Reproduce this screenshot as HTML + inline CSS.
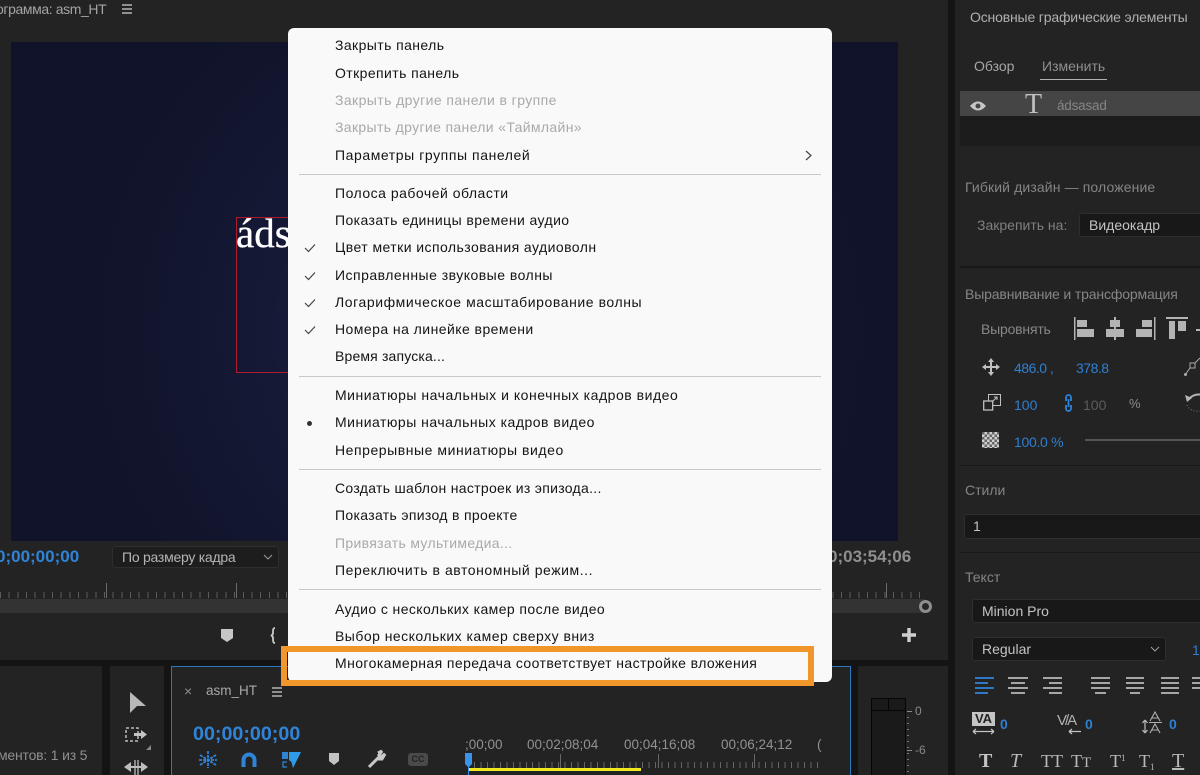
<!DOCTYPE html>
<html lang="ru"><head><meta charset="utf-8"><title>Меню панели</title>
<style>
*{box-sizing:border-box}
html,body{margin:0;padding:0;width:1200px;height:775px;overflow:hidden;background:#232323}
body{position:relative;font-family:"Liberation Sans","DejaVu Sans",sans-serif;color:#a8a8a8;font-size:14px}
.a{position:absolute}
.t{position:absolute;white-space:nowrap;line-height:18px}
.b{color:#2f7fd0}
.m{position:absolute;left:335px;white-space:nowrap;line-height:18px;font-size:14px;color:#141414;letter-spacing:.41px}
.d{color:#a9a9a9}
.s{position:absolute;left:299px;width:522px;height:1px;background:#c9c9c9}
.c{position:absolute;left:303px;width:14px;height:12px}
svg{position:absolute;overflow:visible}
.box{position:absolute;background:#181818;border:1px solid #2e2e2e;border-radius:3px;color:#c4c4c4;line-height:22px;white-space:nowrap}
</style></head><body>

<!-- panel gutters -->
<div class="a" style="left:0;top:660px;width:948px;height:6px;background:#141414"></div>
<div class="a" style="left:948px;top:0;width:7px;height:775px;background:#141414"></div>
<div class="a" style="left:102px;top:660px;width:8px;height:115px;background:#141414"></div>
<div class="a" style="left:164px;top:660px;width:7px;height:115px;background:#141414"></div>
<div class="a" style="left:851px;top:660px;width:7px;height:115px;background:#141414"></div>

<!-- program monitor -->
<div class="t" style="left:-21px;top:0;font-size:14px;color:#a4a4a4;letter-spacing:-.4px">Программа: asm_HT</div>
<svg style="left:122px;top:4px" width="11" height="10"><path d="M0 1H10M0 5H10M0 9H10" stroke="#b4b4b4" stroke-width="1.4"/></svg>
<div class="a" style="left:11px;top:42px;width:887px;height:499px;background:radial-gradient(ellipse 420px 420px at 470px 290px,#1a1e40 0%,#161a38 45%,#11142b 85%,#10132a 100%)"></div>
<div class="a" style="left:236px;top:217px;width:70px;height:156px;border:1px solid #b01a2c"></div>
<div class="t" style="left:236px;top:210px;font:41px/46px 'Liberation Serif',serif;color:#fff;-webkit-text-stroke:.3px #fff">áds</div>

<div class="t" style="left:-4px;top:548px;font-size:17px;color:#2f84d8;font-weight:bold">0;00;00;00</div>
<div class="box" style="left:112px;top:546px;width:167px;height:22px;color:#b4b4b4;padding-left:9px;line-height:20px;background:#1d1d1d;letter-spacing:-.25px">По размеру кадра</div>
<svg style="left:263px;top:554px" width="10" height="6"><path d="M1 1L5 5L9 1" fill="none" stroke="#999" stroke-width="1.1"/></svg>
<div class="t" style="left:828px;top:548px;font-size:17px;color:#8f8f8f;font-weight:bold">0;03;54;06</div>

<!-- scrub ruler -->
<div class="a" style="left:0;top:592px;width:925px;height:6px;background:repeating-linear-gradient(90deg,#5c5c5c 0 1px,transparent 1px 8.67px)"></div>
<div class="a" style="left:-24px;top:583px;width:949px;height:15px;background:repeating-linear-gradient(90deg,#6a6a6a 0 1px,transparent 1px 130px)"></div>
<div class="a" style="left:0;top:599px;width:925px;height:14px;background:#333"></div>
<div class="a" style="left:919px;top:600px;width:13px;height:13px;border:3px solid #8e8e8e;border-radius:50%;background:#262626"></div>

<!-- transport icons -->
<svg style="left:221px;top:629px" width="13" height="14"><path d="M0 0H12V9L6 13L0 9Z" fill="#c6c6c6"/></svg>
<svg style="left:270px;top:627px" width="8" height="17"><path d="M5 1Q3 1 3 4V6Q3 8 1 8.5Q3 9 3 11V13Q3 16 5 16" fill="none" stroke="#c8c8c8" stroke-width="1.8"/></svg>
<svg style="left:902px;top:628px" width="15" height="15"><path d="M7 0V14M0 7H14" stroke="#cfcfcf" stroke-width="3.4"/></svg>

<!-- project panel remainder -->
<div class="t" style="left:-2px;top:746px;font-size:14px;color:#8f8f8f;letter-spacing:-.2px">ментов: 1 из 5</div>

<!-- tools -->
<svg style="left:130px;top:692px" width="17" height="22"><path d="M0 0L16 14H7L0 21Z" fill="#b8b8b8"/></svg>
<svg style="left:125px;top:727px" width="24" height="18"><rect x="1" y="1" width="12" height="13" fill="none" stroke="#bbb" stroke-width="1.5" stroke-dasharray="3 2"/><path d="M9 6H16V3L22 7.5L16 12V9H9Z" fill="#c4c4c4"/></svg>
<svg style="left:124px;top:760px" width="25" height="15"><path d="M0 7L7 2V12ZM24 7L17 2V12Z" fill="#bdbdbd"/><path d="M11 0V15M14 0V15" stroke="#bdbdbd" stroke-width="1.3"/><path d="M6 7H19" stroke="#bdbdbd" stroke-width="2"/></svg>
<svg style="left:146px;top:745px" width="6" height="6"><path d="M5 0V5H0Z" fill="#888"/></svg>

<!-- timeline panel -->
<div class="a" style="left:171px;top:666px;width:680px;height:120px;border:1px solid #2f78bf"></div>
<div class="t" style="left:184px;top:682px;font-size:14px;color:#909090">×</div>
<div class="t" style="left:206px;top:682px;font-size:13.5px;color:#a8a8a8">asm_HT</div>
<svg style="left:272px;top:687px" width="11" height="10"><path d="M0 1H10M0 5H10M0 9H10" stroke="#b4b4b4" stroke-width="1.4"/></svg>
<div class="t" style="left:193px;top:723px;font-size:19.7px;line-height:22px;color:#2f84d8;font-weight:bold">00;00;00;00</div>
<svg style="left:198px;top:751px" width="20" height="18"><path d="M10 0V17M2 4L18 14M2 14L18 4M1 9H19" stroke="#2f84d8" stroke-width="1.8" stroke-dasharray="3 1"/></svg>
<svg style="left:241px;top:752px" width="16" height="15"><path d="M2.5 15V8A5.5 5.5 0 0 1 13.5 8V15" fill="none" stroke="#2f84d8" stroke-width="4"/></svg>
<svg style="left:282px;top:751px" width="19" height="18"><path d="M0 1H6V8H0Z" fill="#2f84d8"/><path d="M5 11H1V16H5" fill="none" stroke="#2f84d8" stroke-width="1.3"/><path d="M7 1H19L11 17L9.5 11L7 9Z" fill="#2f9be8"/></svg>
<svg style="left:329px;top:753px" width="11" height="13"><path d="M0 0H10V8L5 12L0 8Z" fill="#c2c2c2"/></svg>
<svg style="left:367px;top:750px" width="19" height="19"><path d="M2 17L12 7M11 3L15 1L12 5L14 7L18 4L15 9L11 9" fill="none" stroke="#c8c8c8" stroke-width="3"/></svg>
<div class="a" style="left:408px;top:753px;width:20px;height:13px;background:#4a4a4a;border-radius:3px;font:bold 9px/13px 'Liberation Sans',sans-serif;color:#232323;text-align:center">CC</div>

<div class="t" style="left:465px;top:736px;font-size:13.5px;color:#929292">;00;00</div>
<div class="t" style="left:527px;top:736px;font-size:13.5px;color:#929292">00;02;08;04</div>
<div class="t" style="left:624px;top:736px;font-size:13.5px;color:#929292">00;04;16;08</div>
<div class="t" style="left:721px;top:736px;font-size:13.5px;color:#929292">00;06;24;12</div>
<div class="t" style="left:817px;top:736px;font-size:13.5px;color:#929292">(</div>
<div class="a" style="left:474px;top:762px;width:346px;height:6px;background:repeating-linear-gradient(90deg,#666 0 1px,transparent 1px 6.47px)"></div>
<div class="a" style="left:560px;top:754px;width:1px;height:14px;background:#666"></div>
<div class="a" style="left:658px;top:754px;width:1px;height:14px;background:#666"></div>
<div class="a" style="left:754px;top:754px;width:1px;height:14px;background:#666"></div>
<div class="a" style="left:468px;top:768px;width:173px;height:3px;background:#f1e81f"></div>
<svg style="left:465px;top:753px" width="8" height="22"><path d="M0 0H7V11L4 14H3L0 11Z" fill="#3a94ea"/><path d="M3.5 14V22" stroke="#3a94ea"/></svg>

<!-- audio meter -->
<div class="a" style="left:871px;top:698px;width:35px;height:77px;background:#1a1a1a;border:1px solid #050505;border-bottom:0"></div>
<div class="a" style="left:871px;top:710px;width:35px;height:1px;background:#050505"></div>
<div class="a" style="left:888px;top:698px;width:1px;height:12px;background:#050505"></div>
<div class="a" style="left:907px;top:711px;width:5px;height:1px;background:#888"></div>
<div class="a" style="left:907px;top:750px;width:5px;height:1px;background:#888"></div>
<div class="a" style="left:907px;top:717px;width:2px;height:58px;background:repeating-linear-gradient(180deg,#777 0 1px,transparent 1px 6px)"></div>
<div class="t" style="left:915px;top:702px;font-size:12px;color:#8a8a8a">0</div>
<div class="t" style="left:915px;top:741px;font-size:12px;color:#8a8a8a">-6</div>

<!-- essential graphics -->
<div class="t" style="left:970px;top:8px;font-size:14px;color:#b0b0b0;letter-spacing:-.17px">Основные графические элементы</div>
<div class="t" style="left:974px;top:57px;font-size:14px;color:#a6a6a6">Обзор</div>
<div class="t" style="left:1042px;top:57px;font-size:14px;color:#8f8f8f">Изменить</div>
<div class="a" style="left:1040px;top:79px;width:67px;height:1px;background:#b0b0b0"></div>
<div class="a" style="left:960px;top:91px;width:240px;height:25px;background:#454545"></div>
<div class="a" style="left:960px;top:116px;width:240px;height:30px;background:#1c1c1c"></div>
<svg style="left:970px;top:100px" width="17" height="12"><path d="M0 6Q8 -3 16 6Q8 15 0 6Z" fill="#c6c6c6"/><circle cx="8" cy="6" r="2.5" fill="#454545"/></svg>
<div class="t" style="left:1025px;top:89px;font:28px/32px 'Liberation Serif',serif;color:#c2c2c2">T</div>
<div class="t" style="left:1057px;top:97px;font-size:13.5px;color:#858585;letter-spacing:-.2px">ádsasad</div>

<div class="t" style="left:965px;top:178px;font-size:14px;color:#858585;letter-spacing:.12px">Гибкий дизайн — положение</div>
<div class="t" style="left:977px;top:216px;font-size:14px;color:#7f7f7f">Закрепить на:</div>
<div class="box" style="left:1079px;top:213px;width:140px;height:24px;padding-left:9px;font-size:14px">Видеокадр</div>
<div class="a" style="left:960px;top:266px;width:240px;height:2px;background:#191919"></div>

<div class="t" style="left:965px;top:285px;font-size:14px;color:#858585;letter-spacing:-.14px">Выравнивание и трансформация</div>
<div class="t" style="left:981px;top:320px;font-size:14px;color:#878787;letter-spacing:-.2px">Выровнять</div>
<svg style="left:1074px;top:317px" width="126" height="24"><g fill="#b4b4b4"><path d="M0 0H1.5V23H0ZM3 3H13V10H3ZM3 12H20V20H3Z"/><path d="M40 0H42V23H40ZM36 3H46V10H36ZM32 12H50V20H32Z"/><path d="M80 0H81.5V23H80ZM68 3H78V10H68ZM62 12H78V20H62Z"/><path d="M92 0H114V2H92ZM95 4H101V22H95ZM104 4H112V14H104Z"/><path d="M122 12H126V14H122Z"/></g></svg>

<svg style="left:982px;top:358px" width="18" height="18"><path d="M9 0L12 4H10V8H14V6L18 9L14 12V10H10V14H12L9 18L6 14H8V10H4V12L0 9L4 6V8H8V4H6Z" fill="#c0c0c0"/></svg>
<div class="t b" style="left:1014px;top:359px;font-size:14px;letter-spacing:-.5px">486.0 ,</div>
<div class="t b" style="left:1076px;top:359px;font-size:14px;letter-spacing:-.5px">378.8</div>
<svg style="left:1184px;top:358px" width="16" height="20"><rect x="6" y="5" width="5" height="5" fill="none" stroke="#aaa"/><path d="M6 10L1 17M11 5L16 0" stroke="#aaa"/><circle cx="1.5" cy="16.5" r="1.5" fill="#aaa"/></svg>

<svg style="left:983px;top:394px" width="18" height="17"><rect x="5.5" y="0.5" width="12" height="11" fill="none" stroke="#c0c0c0"/><rect x="0.7" y="7" width="9" height="9" fill="#232323" stroke="#c0c0c0" stroke-width="1.3"/><path d="M9 8L14 3M11 3H14V6" fill="none" stroke="#c0c0c0"/></svg>
<div class="t b" style="left:1014px;top:396px;font-size:14px">100</div>
<svg style="left:1064px;top:394px" width="9" height="18"><path d="M2 7V3.5A2.5 2.5 0 0 1 7 3.5V7M2 11V14.5A2.5 2.5 0 0 0 7 14.5V11M4.5 5V13" fill="none" stroke="#2f84d8" stroke-width="1.8"/></svg>
<div class="t" style="left:1083px;top:396px;font-size:14px;color:#5c5c5c">100</div>
<div class="t" style="left:1129px;top:395px;font-size:13px;color:#8c8c8c">%</div>
<svg style="left:1184px;top:393px" width="16" height="20"><path d="M16 1.5Q9 1 5 6" fill="none" stroke="#b4b4b4" stroke-width="2"/><path d="M1 2L3 9L8 5Z" fill="#b4b4b4"/><path d="M3 12Q6 19 16 18" fill="none" stroke="#777" stroke-dasharray="1 2"/></svg>

<div class="a" style="left:982px;top:432px;width:17px;height:16px;background:repeating-conic-gradient(#d0d0d0 0 25%,#666 0 50%) 0 0/5px 5px"></div>
<div class="t b" style="left:1014px;top:433px;font-size:14px;letter-spacing:-.3px">100.0 %</div>
<div class="a" style="left:1085px;top:439px;width:115px;height:2px;background:#555"></div>
<div class="a" style="left:960px;top:465px;width:240px;height:1px;background:#191919"></div>

<div class="t" style="left:965px;top:481px;font-size:14px;color:#858585">Стили</div>
<div class="box" style="left:964px;top:514px;width:250px;height:25px;padding-left:8px;font-size:14px">1</div>
<div class="a" style="left:960px;top:552px;width:240px;height:1px;background:#191919"></div>

<div class="t" style="left:965px;top:568px;font-size:14px;color:#858585">Текст</div>
<div class="box" style="left:972px;top:599px;width:240px;height:24px;padding-left:9px;font-size:14px">Minion Pro</div>
<div class="box" style="left:972px;top:637px;width:194px;height:24px;padding-left:9px;font-size:14px">Regular</div>
<svg style="left:1150px;top:646px" width="10" height="6"><path d="M1 1L5 5L9 1" fill="none" stroke="#999" stroke-width="1.1"/></svg>
<div class="t b" style="left:1192px;top:641px;font-size:14px">10</div>

<svg style="left:975px;top:677px" width="225" height="17" stroke-width="2" fill="none">
<path d="M0 1H19M0 6H13M0 11H19M0 16H13" stroke="#2f78c8"/>
<path d="M33 1H53M36 6H50M33 11H53M36 16H50M68 1H87M74 6H87M68 11H87M74 16H87M116 1H135M116 6H135M116 11H135M120 16H131M151 1H169M151 6H169M151 11H169M155 16H165M186 1H204M186 6H204M186 11H204M186 16H204M217 1H225M217 6H225M217 11H225" stroke="#a6a6a6"/>
</svg>

<div class="a" style="left:972px;top:712px;width:23px;height:14px;background:#c4c4c4;color:#232323;font:bold 13px/14px 'Liberation Sans',sans-serif;text-align:center">VA</div>
<svg style="left:972px;top:728px" width="23" height="7"><path d="M1 3.5H22M1 3.5L4 1M1 3.5L4 6M22 3.5L19 1M22 3.5L19 6" fill="none" stroke="#c4c4c4" stroke-width="1.2"/></svg>
<div class="t b" style="left:1000px;top:715px;font-size:14px;font-weight:bold">0</div>
<div class="t" style="left:1057px;top:712px;font-size:15px;color:#b0b0b0;letter-spacing:-2px">V/A</div>
<svg style="left:1068px;top:728px" width="14" height="7"><path d="M13 3.5H1M1 3.5L4 1M1 3.5L4 6" fill="none" stroke="#c4c4c4" stroke-width="1.2"/></svg>
<div class="t b" style="left:1085px;top:715px;font-size:14px;font-weight:bold">0</div>
<svg style="left:1142px;top:711px" width="22" height="24"><path d="M3 9V22M3 9L0.5 12M3 9L5.5 12M3 22L0.5 19M3 22L5.5 19" fill="none" stroke="#b4b4b4" stroke-width="1.3"/><path d="M8 10L13 1L18 10M10 7H16M8 22L13 13L18 22M10 19H16M7 11.5H20" fill="none" stroke="#b0b0b0" stroke-width="1.1"/></svg>
<div class="t b" style="left:1169px;top:715px;font-size:14px;font-weight:bold">0</div>

<div class="t" style="left:979px;top:751px;font:bold 20px/20px 'Liberation Serif',serif;color:#c4c4c4">T</div>
<div class="t" style="left:1010px;top:751px;font:italic 20px/20px 'Liberation Serif',serif;color:#b8b8b8">T</div>
<div class="t" style="left:1041px;top:751px;font:18px/20px 'Liberation Serif',serif;color:#b8b8b8">TT</div>
<div class="t" style="left:1071px;top:751px;font:18px/20px 'Liberation Serif',serif;color:#b8b8b8">T<span style="font-size:15px">T</span></div>
<div class="t" style="left:1110px;top:751px;font:18px/20px 'Liberation Serif',serif;color:#b8b8b8">T<span style="font-size:9px;position:relative;top:-6px">1</span></div>
<div class="t" style="left:1139px;top:751px;font:18px/20px 'Liberation Serif',serif;color:#b8b8b8">T<span style="font-size:9px;position:relative;top:3px">1</span></div>
<div class="t" style="left:1172px;top:751px;font:20px/20px 'Liberation Serif',serif;color:#b8b8b8;text-decoration:underline">T</div>

<!-- context menu -->
<div class="a" style="left:288px;top:28px;width:544px;height:654px;background:#f9f9f9;border-radius:6px"></div>

<div class="m" style="top:36px">Закрыть панель</div>
<div class="m" style="top:64px">Открепить панель</div>
<div class="m d" style="top:91px">Закрыть другие панели в группе</div>
<div class="m d" style="top:118px;letter-spacing:.35px">Закрыть другие панели «Таймлайн»</div>
<div class="m" style="top:146px;letter-spacing:.57px">Параметры группы панелей</div>
<svg style="left:805px;top:150px" width="7" height="11"><path d="M1 1L6 5.5L1 10" fill="none" stroke="#444" stroke-width="1.2"/></svg>
<div class="s" style="top:174px"></div>

<div class="m" style="top:184px;letter-spacing:.5px">Полоса рабочей области</div>
<div class="m" style="top:211px">Показать единицы времени аудио</div>
<div class="m" style="top:238px;letter-spacing:.44px">Цвет метки использования аудиоволн</div>
<div class="m" style="top:266px;letter-spacing:.48px">Исправленные звуковые волны</div>
<div class="m" style="top:293px;letter-spacing:.57px">Логарифмическое масштабирование волны</div>
<div class="m" style="top:320px;letter-spacing:.45px">Номера на линейке времени</div>
<div class="m" style="top:347px;letter-spacing:.16px">Время запуска...</div>
<svg class="c" style="top:242px" viewBox="0 0 14 12"><path d="M2 6L5.5 9.5L12 2.5" fill="none" stroke="#444" stroke-width="1.2"/></svg>
<svg class="c" style="top:270px" viewBox="0 0 14 12"><path d="M2 6L5.5 9.5L12 2.5" fill="none" stroke="#444" stroke-width="1.2"/></svg>
<svg class="c" style="top:297px" viewBox="0 0 14 12"><path d="M2 6L5.5 9.5L12 2.5" fill="none" stroke="#444" stroke-width="1.2"/></svg>
<svg class="c" style="top:324px" viewBox="0 0 14 12"><path d="M2 6L5.5 9.5L12 2.5" fill="none" stroke="#444" stroke-width="1.2"/></svg>
<div class="s" style="top:376px"></div>

<div class="m" style="top:386px;letter-spacing:.525px">Миниатюры начальных и конечных кадров видео</div>
<div class="m" style="top:413px;letter-spacing:.5px">Миниатюры начальных кадров видео</div>
<div class="m" style="top:441px;letter-spacing:.55px">Непрерывные миниатюры видео</div>
<div class="a" style="left:307px;top:421px;width:5px;height:5px;border-radius:50%;background:#333"></div>
<div class="s" style="top:469px"></div>

<div class="m" style="top:479px;letter-spacing:.3px">Создать шаблон настроек из эпизода...</div>
<div class="m" style="top:506px;letter-spacing:.33px">Показать эпизод в проекте</div>
<div class="m d" style="top:534px;letter-spacing:.33px">Привязать мультимедиа...</div>
<div class="m" style="top:561px;letter-spacing:.56px">Переключить в автономный режим...</div>
<div class="s" style="top:589px"></div>

<div class="m" style="top:600px">Аудио с нескольких камер после видео</div>
<div class="m" style="top:627px;letter-spacing:.47px">Выбор нескольких камер сверху вниз</div>
<div class="m" style="top:654px">Многокамерная передача соответствует настройке вложения</div>

<div class="a" style="left:281px;top:646px;width:533px;height:40px;border:6px solid #f0962a"></div>
</body></html>
